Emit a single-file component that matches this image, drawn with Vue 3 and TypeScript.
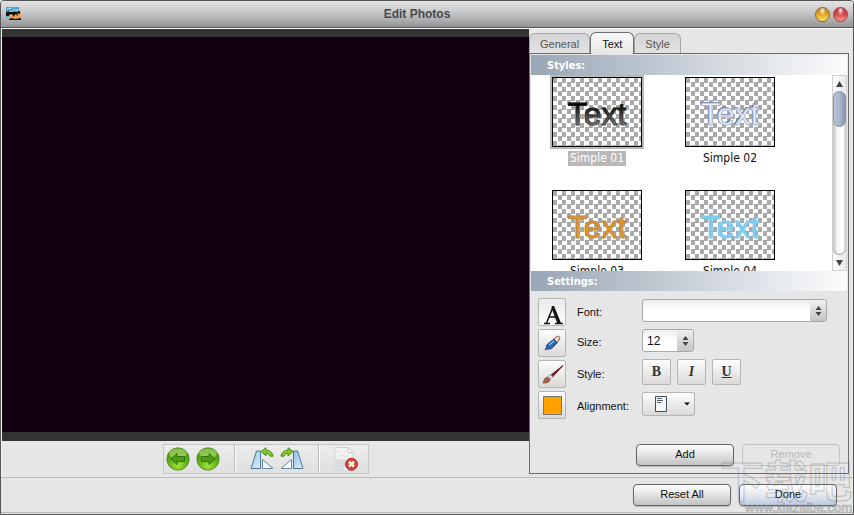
<script setup lang="ts">
import { ref } from 'vue'

interface TextStyle {
  name: string
  look: string
}

const tabs = ['General', 'Text', 'Style']
const activeTab = ref('Text')

const styles: TextStyle[] = [
  { name: 'Simple 01', look: 'charcoal' },
  { name: 'Simple 02', look: 'outline' },
  { name: 'Simple 03', look: 'amber' },
  { name: 'Simple 04', look: 'sky' },
]
const selectedStyle = ref('Simple 01')

const font = ref('')
const size = ref('12')
const sizes = ['8', '10', '12', '14', '18', '24']
</script>

<template>
  <div class="window">
    <header class="titlebar">
      <svg class="app-icon" viewBox="0 0 16 14" aria-hidden="true">
        <rect x="0" y="0" width="13" height="10" fill="#4fa3cf" />
        <path d="M0 5l3-1 4 2v3H0z" fill="#17181a" />
        <path d="M1 2l5-1M7 3h5" stroke="#b8dcec" />
        <rect x="3" y="4" width="12" height="9" fill="#e9a35f" />
        <path d="M3 5h5v-1l2 1 4-1v3l-3-1 1 3-3-2-1 3-2-3-3 1zM3 12l3-1 3 1 6-1v2H3z" fill="#120c0a" />
      </svg>
      <h1 class="title">Edit Photos</h1>
      <div class="window-controls">
        <button class="orb orb-yellow" type="button" aria-label="Minimize"></button>
        <button class="orb orb-red" type="button" aria-label="Close"></button>
      </div>
    </header>

    <main class="workspace">
      <section class="preview">
        <div class="stage"><div class="photo"></div></div>
        <div class="toolbar-row">
          <div class="toolbar">
            <div class="tool-group nav-group">
              <button class="tool" type="button" aria-label="Previous">
                <svg width="24" height="24" viewBox="0 0 24 24">
                  <defs>
                    <radialGradient id="green" cx=".5" cy=".8" r=".75">
                      <stop offset="0" stop-color="#a4e33a" />
                      <stop offset=".55" stop-color="#64ae1c" />
                      <stop offset="1" stop-color="#3f8a0c" />
                    </radialGradient>
                  </defs>
                  <circle cx="12" cy="12" r="11.2" fill="url(#green)" stroke="#4b8f1c" stroke-width=".8" />
                  <ellipse cx="12" cy="6.5" rx="9" ry="5" fill="#c9f08a" opacity=".5" />
                  <path d="M5 12l6-5.500v3h7.500v5H11v3z" fill="#4a9c12" stroke="#2f760a" />
                </svg>
              </button>
              <button class="tool" type="button" aria-label="Next">
                <svg width="24" height="24" viewBox="0 0 24 24">
                  <circle cx="12" cy="12" r="11.2" fill="url(#green)" stroke="#4b8f1c" stroke-width=".8" />
                  <ellipse cx="12" cy="6.5" rx="9" ry="5" fill="#c9f08a" opacity=".5" />
                  <path d="M19 12l-6-5.500v3H5.500v5H13v3z" fill="#4a9c12" stroke="#2f760a" />
                </svg>
              </button>
            </div>
            <div class="tool-group flip-group">
              <button class="tool" type="button" aria-label="Rotate left">
                <svg width="24" height="24" viewBox="0 0 24 24">
                  <defs>
                    <linearGradient id="blue" x2="1" y2="1">
                      <stop offset="0" stop-color="#8ec0e9" />
                      <stop offset="1" stop-color="#e3f1fc" />
                    </linearGradient>
                  </defs>
                  <path d="M6.500 4h4v17.500H1z" fill="url(#blue)" stroke="#4c7795" />
                  <path d="M12.500 12.500v9h10.500z" fill="#f6faff" stroke="#6688a3" />
                  <path d="M11 4.500L16 .7v2.500c4 0 6.500 2.500 7 6h-3c-.5-2-2-2.800-4-2.700v2.300z" fill="#86c62b" stroke="#4c8b13" />
                </svg>
              </button>
              <button class="tool" type="button" aria-label="Rotate right">
                <svg width="24" height="24" viewBox="0 0 24 24">
                  <path d="M17.500 4h-4v17.500H23z" fill="url(#blue)" stroke="#4c7795" />
                  <path d="M11.500 12.500v9H1z" fill="#f6faff" stroke="#6688a3" />
                  <path d="M13 4.500L8 .7v2.500c-4 0-6.500 2.500-7 6h3c.5-2 2-2.800 4-2.700v2.300z" fill="#86c62b" stroke="#4c8b13" />
                </svg>
              </button>
            </div>
            <div class="tool-group delete-group">
              <button class="tool" type="button" aria-label="Delete">
                <svg width="24" height="24" viewBox="0 0 24 24">
                  <path d="M1 .5h13l5 5v18H1z" fill="#f1f2f3" stroke="#d2d5d8" />
                  <path d="M2 12h10l-2 11H2z" fill="#d9dde1" />
                  <path d="M14 .5v5h5z" fill="#fff" stroke="#c6cacd" />
                  <path d="M3 5h8M3 9h12M3 13h10" stroke="#e2e5e8" />
                  <path d="M3 4h3M7 8h3" stroke="#ecd3d3" />
                  <circle cx="17.500" cy="17.200" r="6" fill="#d94436" stroke="#b43329" />
                  <path d="M15 14.700l5 5M20 14.700l-5 5" stroke="#fff" stroke-width="2.400" />
                </svg>
              </button>
            </div>
          </div>
        </div>
      </section>

      <aside class="side">
        <nav class="tabs" role="tablist">
          <button
            v-for="tab in tabs"
            :key="tab"
            type="button"
            role="tab"
            class="tab"
            :class="{ active: tab === activeTab }"
            :aria-selected="tab === activeTab"
            @click="activeTab = tab"
          >{{ tab }}</button>
        </nav>

        <div class="panel">
          <h2 class="section-head">Styles:</h2>
          <div class="style-browser">
            <div class="style-list">
              <button
                v-for="item in styles"
                :key="item.name"
                type="button"
                class="style-item"
                :class="{ selected: item.name === selectedStyle }"
                @click="selectedStyle = item.name"
              >
                <span class="thumb"><span class="sample" :class="item.look">Text</span></span>
                <span class="caption">{{ item.name }}</span>
              </button>
            </div>
            <div class="scrollbar">
              <button class="scroll-button" type="button" aria-label="Scroll up">
                <svg width="7" height="6" viewBox="0 0 7 6"><path d="M3.500 0L7 6H0z" fill="#444" /></svg>
              </button>
              <div class="track"><div class="handle"></div></div>
              <button class="scroll-button" type="button" aria-label="Scroll down">
                <svg width="7" height="6" viewBox="0 0 7 6"><path d="M3.500 6L7 0H0z" fill="#444" /></svg>
              </button>
            </div>
          </div>

          <h2 class="section-head">Settings:</h2>
          <div class="settings">
            <div class="modes">
              <button class="mode current" type="button" aria-label="Text">
                <svg width="26" height="26" viewBox="0 0 26 26">
                  <path d="M7.500 24L14 8M10 18h8" fill="none" stroke="#111" stroke-width="1.500" />
                  <path d="M13 7h2l7 17h-3.800L12.500 9z" fill="#111" />
                  <path d="M5 24.500h6M16 24.500h8" stroke="#111" stroke-width="1.500" />
                </svg>
              </button>
              <button class="mode" type="button" aria-label="Outline">
                <svg width="26" height="26" viewBox="0 0 26 26">
                  <path d="M6 20l2-2" stroke="#777" stroke-width="2" />
                  <path d="M7.500 19c-.5-3 .5-5 3-6.500L15 9l3.500 3.500-3.500 3.500c-1.500 2.500-4 3.500-7.500 3z" fill="#2b6ab8" stroke="#1b4784" />
                  <path d="M10 15l5-4" stroke="#8dbce9" stroke-width="1.500" />
                  <path d="M15 9l3-2.500c2-1 3.500.5 2.500 2.500l-2 3.500z" fill="#e7dcd9" stroke="#a14b48" />
                </svg>
              </button>
              <button class="mode" type="button" aria-label="Brush">
                <svg width="26" height="26" viewBox="0 0 26 26">
                  <path d="M24 4.500L12 14l1.500 2z" fill="#8f2029" stroke="#681820" />
                  <path d="M11.500 13.500l2.500 2.500-3 2.500-2.500-2.500z" fill="#dadada" stroke="#888" stroke-width=".6" />
                  <path d="M8.500 16l2.500 2.500c-.5 3-3 3.500-7 3.500C5 20 5 17 8.500 16z" fill="#a86645" stroke="#6e3928" stroke-width=".7" />
                </svg>
              </button>
              <button class="mode" type="button" aria-label="Color"><span class="swatch"></span></button>
            </div>

            <form class="fields" @submit.prevent>
              <label class="label" for="font">Font:</label>
              <div class="combo wide">
                <select id="font" v-model="font">
                  <option value=""></option>
                  <option>Arial</option>
                  <option>Tahoma</option>
                </select>
                <span class="stepper" aria-hidden="true">
                  <svg width="7" height="10" viewBox="0 0 7 10"><path d="M3.500 0L6.500 4h-6zM3.500 10l-3-4h6z" fill="#444" /></svg>
                </span>
              </div>

              <label class="label" for="size">Size:</label>
              <div class="combo narrow">
                <select id="size" v-model="size">
                  <option v-for="s in sizes" :key="s">{{ s }}</option>
                </select>
                <span class="stepper" aria-hidden="true">
                  <svg width="7" height="10" viewBox="0 0 7 10"><path d="M3.500 0L6.500 4h-6zM3.500 10l-3-4h6z" fill="#444" /></svg>
                </span>
              </div>

              <span class="label">Style:</span>
              <div class="format">
                <button class="format-button" type="button"><b>B</b></button>
                <button class="format-button" type="button"><i>I</i></button>
                <button class="format-button" type="button"><u>U</u></button>
              </div>

              <span id="align-label" class="label">Alignment:</span>
              <button class="align-button" type="button" aria-labelledby="align-label">
                <svg width="12" height="16" viewBox="0 0 12 16">
                  <path d="M.5.5h11v15H.5z" fill="#f6f7f8" stroke="#3f4c59" />
                  <path d="M2 2.500h5M2 4.500h6M2 6.500h4" stroke="#53606d" />
                </svg>
                <svg width="6" height="4" viewBox="0 0 6 4"><path d="M0 .5h6L3 3.500z" fill="#111" /></svg>
              </button>
            </form>
          </div>
          <div class="panel-actions">
            <button class="push" type="button">Add</button>
            <button class="push" type="button" disabled>Remove</button>
          </div>
        </div>
      </aside>
    </main>

    <footer class="footer">
      <button class="push" type="button">Reset All</button>
      <button class="push done" type="button">Done</button>
    </footer>

    <div class="watermark">
      <span class="mark-name">下载吧</span>
      <span class="mark-url">www.xiazaiba.com</span>
    </div>
  </div>
</template>

<style>
body {
  background: #e6e6e6;
}
</style>

<style scoped>
* {
  box-sizing: border-box;
}
button,
select {
  margin: 0;
  padding: 0;
  font: inherit;
  color: inherit;
}
svg {
  display: block;
}
.window {
  position: relative;
  display: flex;
  flex-direction: column;
  height: 100vh;
  overflow: hidden;
  border: 1px solid #555;
  border-radius: 4px 4px 0 0;
  background: #e6e6e6;
  font: 11px/14px 'Liberation Sans', Arial, sans-serif;
  color: #111;
}
.titlebar {
  flex: none;
  display: grid;
  grid-template-columns: 1fr auto 1fr;
  align-items: center;
  height: 27px;
  padding: 0 5px;
  border-bottom: 1px solid #555;
  background: linear-gradient(#e4e4e5, #c6c7c9 45%, #939597);
}
.app-icon {
  width: 16px;
  height: 14px;
}
.title {
  margin: 0;
  padding-right: 20px;
  font-size: 12px;
  line-height: 16px;
  color: #48484a;
}
.window-controls {
  display: flex;
  justify-content: flex-end;
  gap: 3px;
}
.orb {
  width: 15px;
  height: 15px;
  border: 1px solid #8a6420;
  border-radius: 50%;
}
.orb-yellow {
  background: radial-gradient(ellipse at 50% 20%, #fff1ca, transparent 35%), linear-gradient(#b9842b, #dfa323 50%, #ffe96b);
}
.orb-red {
  border-color: #a33a3e;
  background: radial-gradient(ellipse at 50% 20%, #ffe0e0, transparent 35%), linear-gradient(#bd383d, #d3484b 50%, #ff9c95);
}
.workspace {
  flex: 1;
  min-height: 0;
  display: grid;
  grid-template-columns: minmax(0, 1fr) 324px;
  border-top: 1px solid #fff;
  border-left: 1px solid #f4f4f4;
}
.preview {
  display: flex;
  flex-direction: column;
  min-height: 0;
}
.stage {
  flex: 1;
  display: flex;
  padding: 8px 0 9px;
  background: #333;
}
.photo {
  flex: 1;
  background: #11000f;
}
.toolbar-row {
  flex: none;
  display: flex;
  justify-content: center;
  height: 36px;
  padding: 3px 0 2px;
}
.toolbar {
  display: flex;
  height: 30px;
  border: 1px solid #c6c6c6;
  background: linear-gradient(#ececec, #e0e0e0);
}
.tool-group {
  display: flex;
  align-items: center;
  gap: 6px;
  padding: 0 14px;
}
.nav-group {
  padding: 0 14px 0 2px;
}
.tool-group + .tool-group {
  border-left: 1px solid #b8b8b8;
  box-shadow: inset 1px 0 #fff;
}
.delete-group {
  padding: 0 10px 0 15px;
}
.flip-group {
  padding: 0 14px 0 15px;
}
.tool {
  border: 0;
  background: none;
}
.side {
  display: flex;
  flex-direction: column;
  min-height: 0;
  padding: 3px 4px 3px 0;
}
.tabs {
  display: flex;
  align-items: flex-end;
  height: 21px;
}
.tab {
  height: 20px;
  padding: 0 10px;
  border: 1px solid #a6a6a6;
  border-bottom: 0;
  border-radius: 6px 6px 0 0;
  background: linear-gradient(#d5d5d5, #e2e2e2);
  color: #555;
}
.tab.active {
  position: relative;
  height: 22px;
  margin-bottom: -1px;
  padding: 0 11px;
  border-color: #6d6d6d;
  background: linear-gradient(#f8f8f8, #e6e6e6);
  color: #111;
}
.panel {
  flex: 1;
  min-height: 0;
  display: flex;
  flex-direction: column;
  padding: 1px;
  border: 1px solid #6d6d6d;
}
.section-head {
  flex: none;
  margin: 0;
  padding: 2px 16px 0;
  height: 20px;
  background: linear-gradient(90deg, #98a6b5, #fcfcfd);
  font: bold 11px/18px 'DejaVu Sans Condensed', 'DejaVu Sans', sans-serif;
  color: #fff;
}
.style-browser {
  flex: 1;
  min-height: 0;
  display: flex;
  background: #fff;
}
.style-list {
  flex: 1;
  display: grid;
  grid-template-columns: 94px 94px;
  grid-auto-rows: 113px;
  column-gap: 39px;
  padding-left: 19px;
  overflow: hidden;
}
.style-item {
  display: flex;
  flex-direction: column;
  align-items: center;
  gap: 3px;
  border: 0;
  background: none;
  font: 12px/15px 'DejaVu Sans Condensed', 'DejaVu Sans', sans-serif;
}
.thumb {
  display: grid;
  place-items: center;
  width: 90px;
  height: 70px;
  margin: 2px 2px 1px;
  padding-top: 3px;
  border: 1px solid #000;
  background: repeating-conic-gradient(#fff 0 25%, #a9a9a9 0 50%) 0 0 / 9px 9px;
}
.selected .thumb {
  box-shadow: 0 0 0 2px #b8b8b8;
}
.sample {
  font: 32px/36px 'Liberation Sans', Arial, sans-serif;
  -webkit-text-stroke: 1px;
}
.charcoal {
  background: linear-gradient(#000 25%, #888 85%);
  background-clip: text;
  -webkit-text-fill-color: transparent;
  -webkit-text-stroke-color: rgba(50, 50, 50, 0.7);
}
.outline {
  color: #f2f6ff;
  -webkit-text-stroke: 1px #a9b9d4;
  text-shadow: -1px -1px #4c5d7c;
}
.amber {
  color: #eb9a27;
  -webkit-text-stroke-color: #b98540;
}
.sky {
  color: #7dcdf0;
  -webkit-text-stroke-color: #7dcdf0;
}
.caption {
  padding: 0 2px;
}
.selected .caption {
  background: #b8b8b8;
  color: #fff;
}
.scrollbar {
  flex: none;
  display: flex;
  flex-direction: column;
  width: 15px;
  border: 1px solid #d0d0d0;
  background: #f4f4f4;
}
.scroll-button {
  flex: none;
  display: grid;
  place-items: center;
  height: 15px;
  border: 0;
  background: linear-gradient(90deg, #fff, #e8e8e8);
}
.track {
  flex: 1;
  border-radius: 7px;
  background: linear-gradient(90deg, #c4c4c4, #f5f5f5 35%, #fff 75%, #ccc);
  box-shadow: inset 0 -1px 1px #999;
}
.handle {
  height: 22%;
  border: 1px solid #8592a7;
  border-radius: 7px;
  background: linear-gradient(90deg, #b9c4d6, #a9b7cd 50%, #8795b0);
}
.settings {
  flex: none;
  display: flex;
  gap: 11px;
  padding: 7px 7px 0;
}
.modes {
  display: flex;
  flex-direction: column;
  gap: 3px;
}
.mode,
.format-button,
.align-button {
  display: grid;
  place-items: center;
  border: 1px solid #b5b5b5;
  border-radius: 2px;
  background: linear-gradient(#fdfdfd, #dcdad8);
}
.mode {
  width: 28px;
  height: 28px;
}
.mode.current {
  background: linear-gradient(#e9e9e9, #fff);
}
.swatch {
  width: 19px;
  height: 19px;
  border: 1px solid #777;
  background: #ffa200;
}
.fields {
  flex: 1;
  display: grid;
  grid-template-columns: 65px 1fr;
  grid-template-rows: 23px 23px 26px 24px;
  row-gap: 7px;
  padding-top: 1px;
}
.label {
  align-self: center;
  padding-top: 3px;
}
.combo {
  position: relative;
  display: flex;
  overflow: hidden;
  border: 1px solid #a9a9a9;
  border-radius: 3px;
  background: linear-gradient(#ececec, #fff 50%);
}
.wide {
  width: 185px;
}
.narrow {
  width: 52px;
}
.combo select {
  width: 100%;
  padding-left: 4px;
  border: 0;
  outline: 0;
  appearance: none;
  background: none;
  font-size: 12px;
}
.stepper {
  position: absolute;
  inset: 0 0 0 auto;
  display: grid;
  place-items: center;
  width: 16px;
  background: linear-gradient(#f0f0f0, #c4c4c4);
  pointer-events: none;
}
.format {
  display: flex;
  gap: 6px;
}
.format-button {
  width: 29px;
  font: bold 14px/16px 'Liberation Serif', 'Times New Roman', serif;
  color: #333;
}
.align-button {
  display: flex;
  align-items: center;
  justify-content: space-between;
  width: 53px;
  padding: 0 4px 0 12px;
}
.panel-actions {
  flex: none;
  display: flex;
  justify-content: flex-end;
  gap: 8px;
  padding: 25px 7px 6px 0;
}
.push {
  width: 98px;
  height: 22px;
  padding-bottom: 2px;
  border: 1px solid #666;
  border-radius: 4px;
  background: linear-gradient(#fff, #e2e2e2 50%, #c2c2c2);
  box-shadow: 0 1px 1px #b5b5b5;
}
.push:disabled {
  border-color: #c4c4c4;
  background: #e6e6e6;
  box-shadow: none;
  color: #b8b8b8;
}
.done {
  background: linear-gradient(#fff, #e6e8ec 50%, #bccbe2);
}
.footer {
  flex: none;
  display: flex;
  justify-content: flex-end;
  gap: 8px;
  height: 36px;
  margin-bottom: 1px;
  padding: 6px 16px 0 0;
  border-top: 1px solid #bbb;
  border-bottom: 1px solid #bbb;
}
.watermark {
  position: absolute;
  right: 1px;
  bottom: 0;
  display: flex;
  flex-direction: column;
  align-items: flex-end;
  pointer-events: none;
  color: transparent;
  font-family: 'Noto Sans CJK SC', sans-serif;
}
.mark-name {
  font-size: 44px;
  font-weight: bold;
  line-height: 44px;
  -webkit-text-stroke: 1px rgba(120, 120, 120, 0.4);
}
.mark-url {
  font: 13px/13px 'Liberation Sans', Arial, sans-serif;
  -webkit-text-stroke: 1px rgba(120, 120, 120, 0.4);
}
</style>
